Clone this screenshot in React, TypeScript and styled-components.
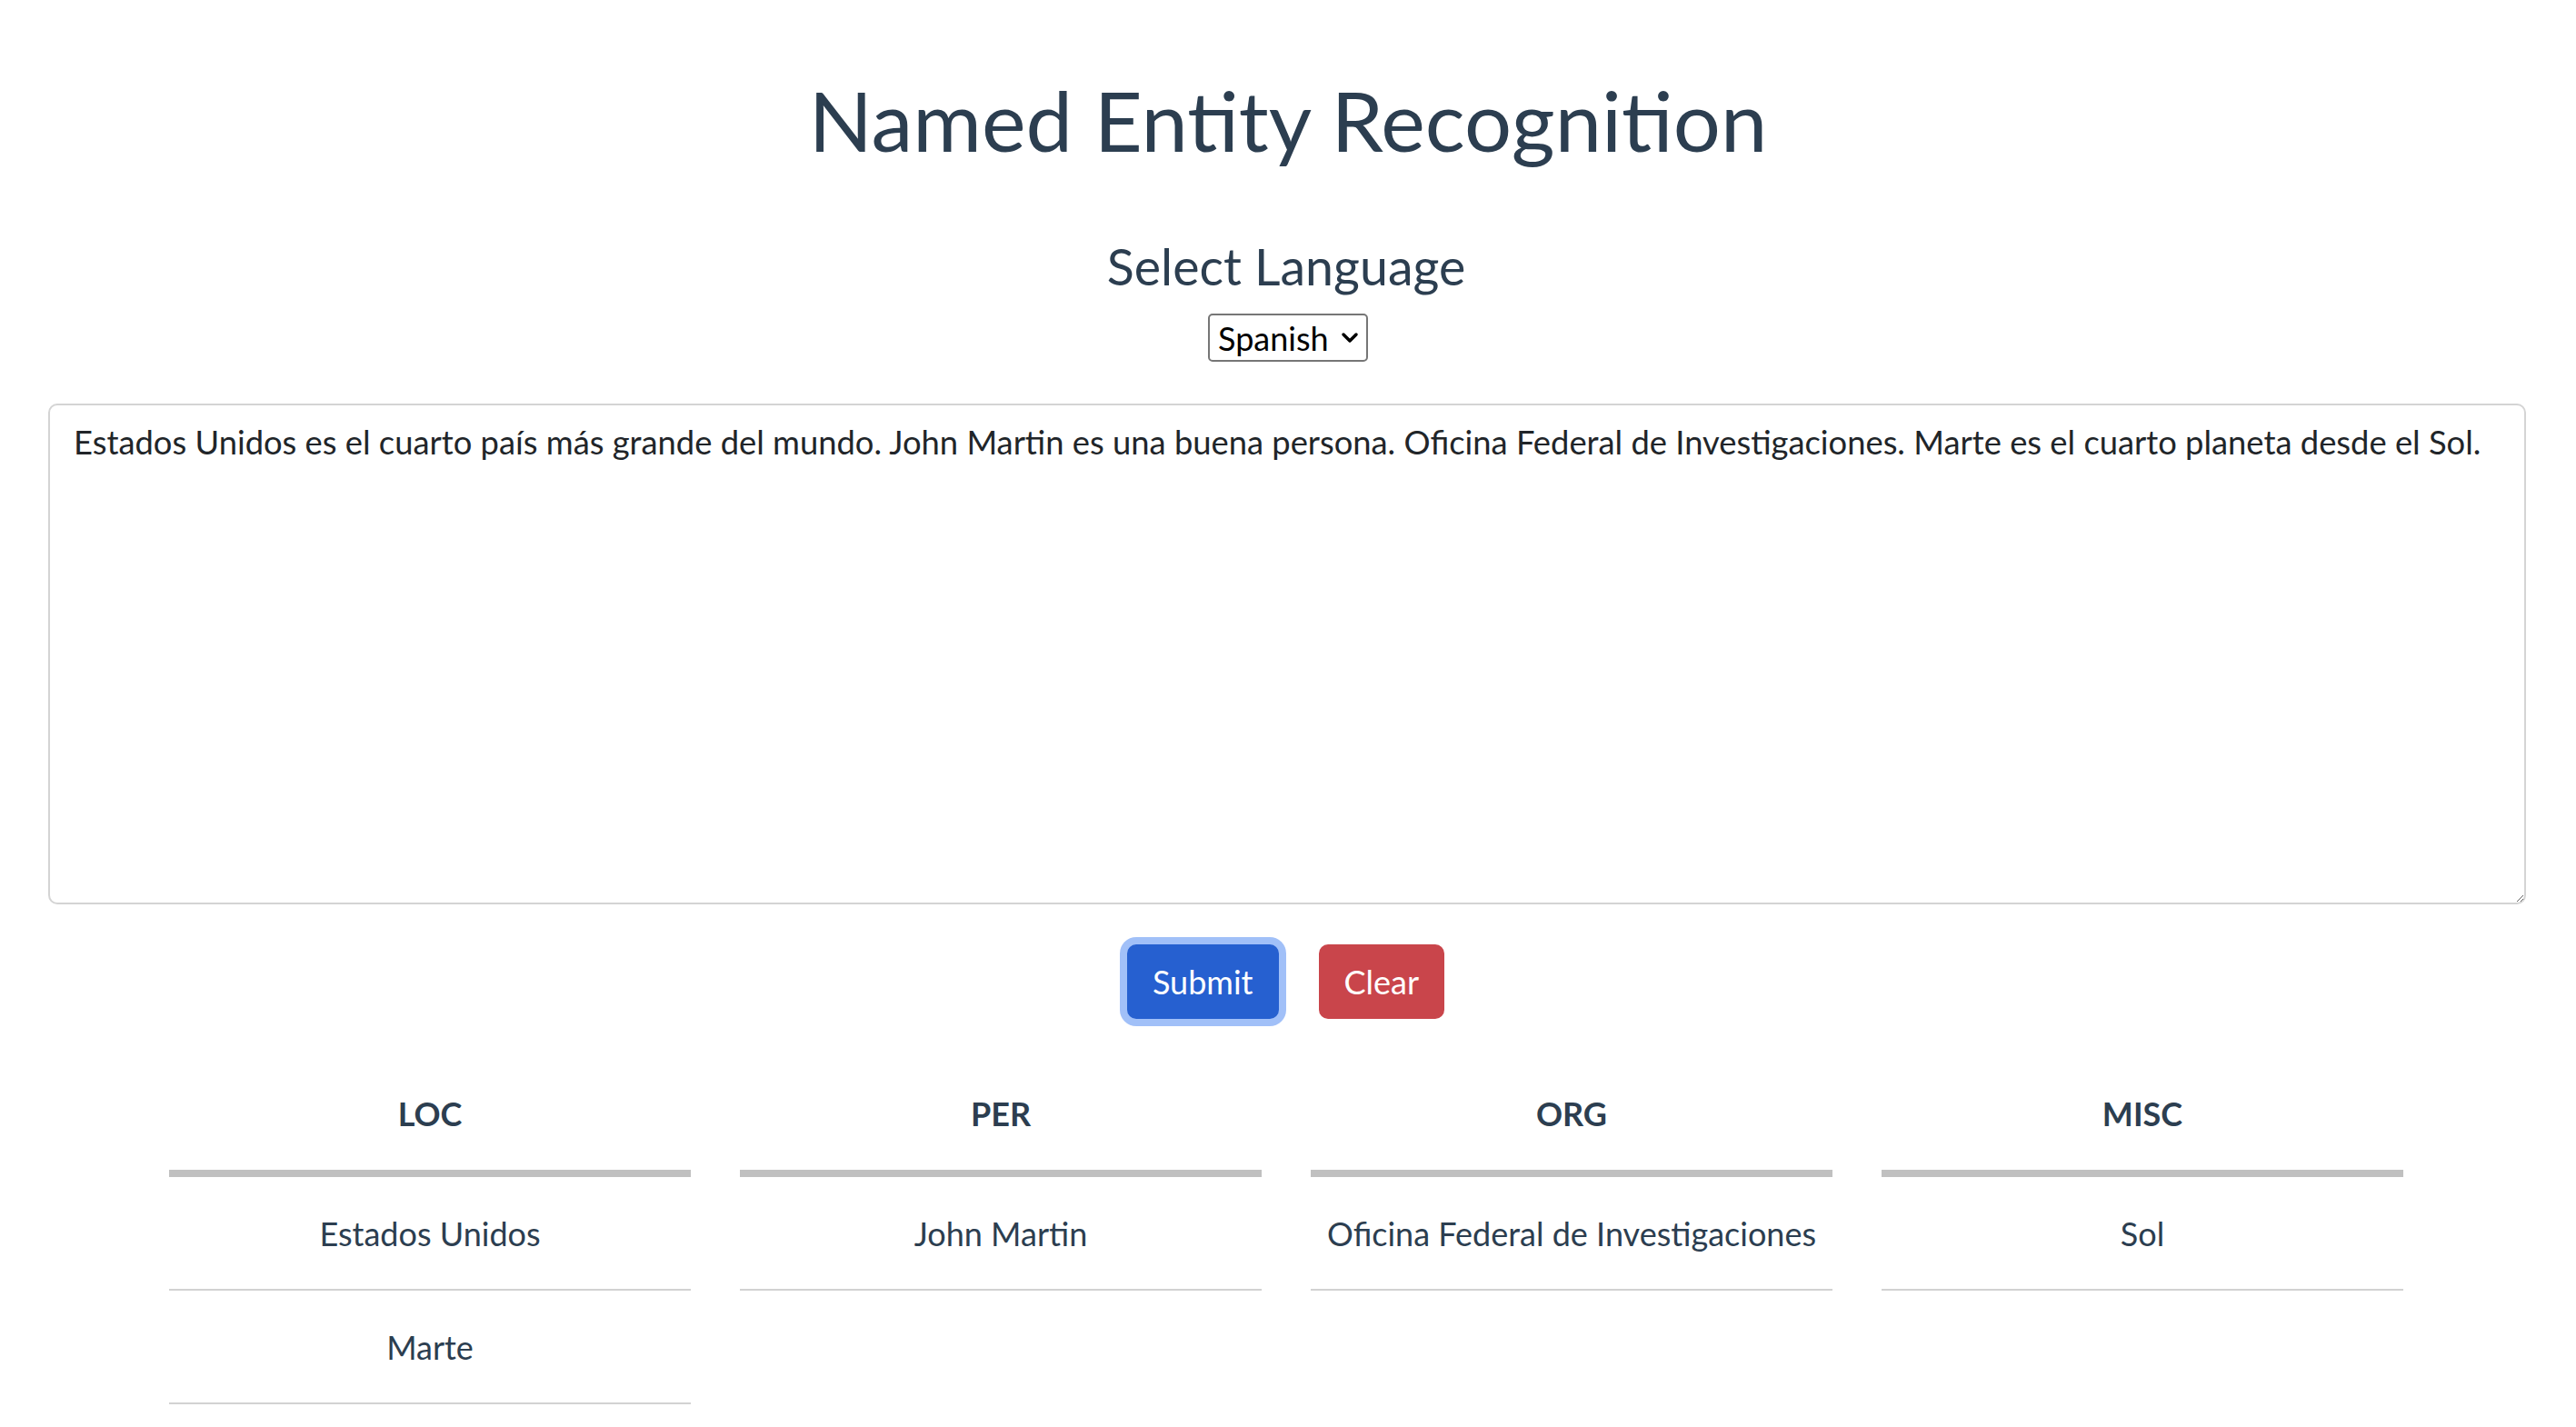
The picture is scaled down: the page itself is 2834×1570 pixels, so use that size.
import React, { useState } from "react";
import styled, { createGlobalStyle } from "styled-components";

const GlobalStyle = createGlobalStyle`
  html, body {
    margin: 0;
    padding: 0;
    background: #ffffff;
  }
  * { box-sizing: border-box; }
`;

const Page = styled.div`
  font-family: Lato, "Noto Sans", sans-serif;
  color: #2c3e50;
  text-align: center;
  padding: 74px 0 40px;
`;

const Title = styled.h1`
  margin: 0;
  font-size: 92px;
  line-height: 116px;
  font-weight: 400;
`;

const Subtitle = styled.h3`
  margin: 70px 4px 0 0;
  font-size: 55.5px;
  line-height: 65px;
  font-weight: 400;
`;

const SelectWrap = styled.div`
  position: relative;
  display: inline-block;
  margin-top: 20px;
`;

const Select = styled.select`
  appearance: none;
  -webkit-appearance: none;
  width: 176px;
  height: 53px;
  border: 2px solid #767676;
  border-radius: 5px;
  background: #ffffff;
  color: #000000;
  font-family: Lato, "Noto Sans", sans-serif;
  font-size: 36px;
  padding: 0 40px 0 9px;
  text-align: left;
  display: block;
`;

const Chevron = styled.svg`
  position: absolute;
  right: 10px;
  top: 50%;
  transform: translateY(-50%);
  pointer-events: none;
`;

const TextWrap = styled.div`
  padding: 0 55px 0 53px;
  margin-top: 46px;
`;

const TextArea = styled.textarea`
  display: block;
  width: 100%;
  height: 551px;
  border: 2px solid #d4d4d4;
  border-radius: 10px;
  padding: 14px 26px;
  font-family: Lato, "Noto Sans", sans-serif;
  font-size: 36.35px;
  line-height: 52px;
  color: #212529;
  resize: vertical;
  outline: none;
`;

const ButtonRow = styled.div`
  display: flex;
  justify-content: center;
  gap: 44px;
  margin-top: 44px;
  padding-right: 5px;
`;

const Button = styled.button<{ $variant: "primary" | "danger"; $focused?: boolean }>`
  height: 82px;
  padding: 0 28px;
  border: none;
  border-radius: 10px;
  font-family: Lato, "Noto Sans", sans-serif;
  font-size: 36px;
  color: #ffffff;
  cursor: pointer;
  background: ${(p) => (p.$variant === "primary" ? "#2660d0" : "#c9454b")};
  box-shadow: ${(p) => (p.$focused ? "0 0 0 8px #a1c0f8" : "none")};
`;

const Tables = styled.div`
  display: flex;
  justify-content: center;
  gap: 54px;
  margin-top: 42px;
  padding-right: 4px;
`;

const Column = styled.div`
  width: 574px;
  display: flex;
  flex-direction: column;
`;

const HeadCell = styled.div`
  font-size: 36px;
  font-weight: 700;
  line-height: 44px;
  padding: 40px 0;
  border-bottom: 8px solid #c0c0c0;
  color: #2c3e50;
`;

const Cell = styled.div`
  font-size: 36px;
  line-height: 44px;
  padding: 40px 0 39px;
  border-bottom: 2px solid #d2d2d2;
  color: #2c3e50;
`;

const initialText =
  "Estados Unidos es el cuarto país más grande del mundo. John Martin es una buena persona. Oficina Federal de Investigaciones. Marte es el cuarto planeta desde el Sol.";

const entities: { label: string; items: string[] }[] = [
  { label: "LOC", items: ["Estados Unidos", "Marte"] },
  { label: "PER", items: ["John Martin"] },
  { label: "ORG", items: ["Oficina Federal de Investigaciones"] },
  { label: "MISC", items: ["Sol"] },
];

export default function App() {
  const [text, setText] = useState(initialText);
  const [lang, setLang] = useState("es");

  return (
    <>
      <GlobalStyle />
      <Page>
        <Title>Named Entity Recognition</Title>
        <Subtitle>Select Language</Subtitle>
        <SelectWrap>
          <Select value={lang} onChange={(e) => setLang(e.target.value)}>
            <option value="en">English</option>
            <option value="es">Spanish</option>
          </Select>
          <Chevron width="20" height="14" viewBox="0 0 20 14">
            <path d="M3 3 L10 10 L17 3" fill="none" stroke="#000" strokeWidth="3.5" strokeLinecap="round" strokeLinejoin="round" />
          </Chevron>
        </SelectWrap>
        <TextWrap>
          <TextArea value={text} onChange={(e) => setText(e.target.value)} />
        </TextWrap>
        <ButtonRow>
          <Button $variant="primary" $focused>Submit</Button>
          <Button $variant="danger" onClick={() => setText("")}>Clear</Button>
        </ButtonRow>
        <Tables>
          {entities.map((col) => (
            <Column key={col.label}>
              <HeadCell>{col.label}</HeadCell>
              {col.items.map((it) => (
                <Cell key={it}>{it}</Cell>
              ))}
            </Column>
          ))}
        </Tables>
      </Page>
    </>
  );
}
